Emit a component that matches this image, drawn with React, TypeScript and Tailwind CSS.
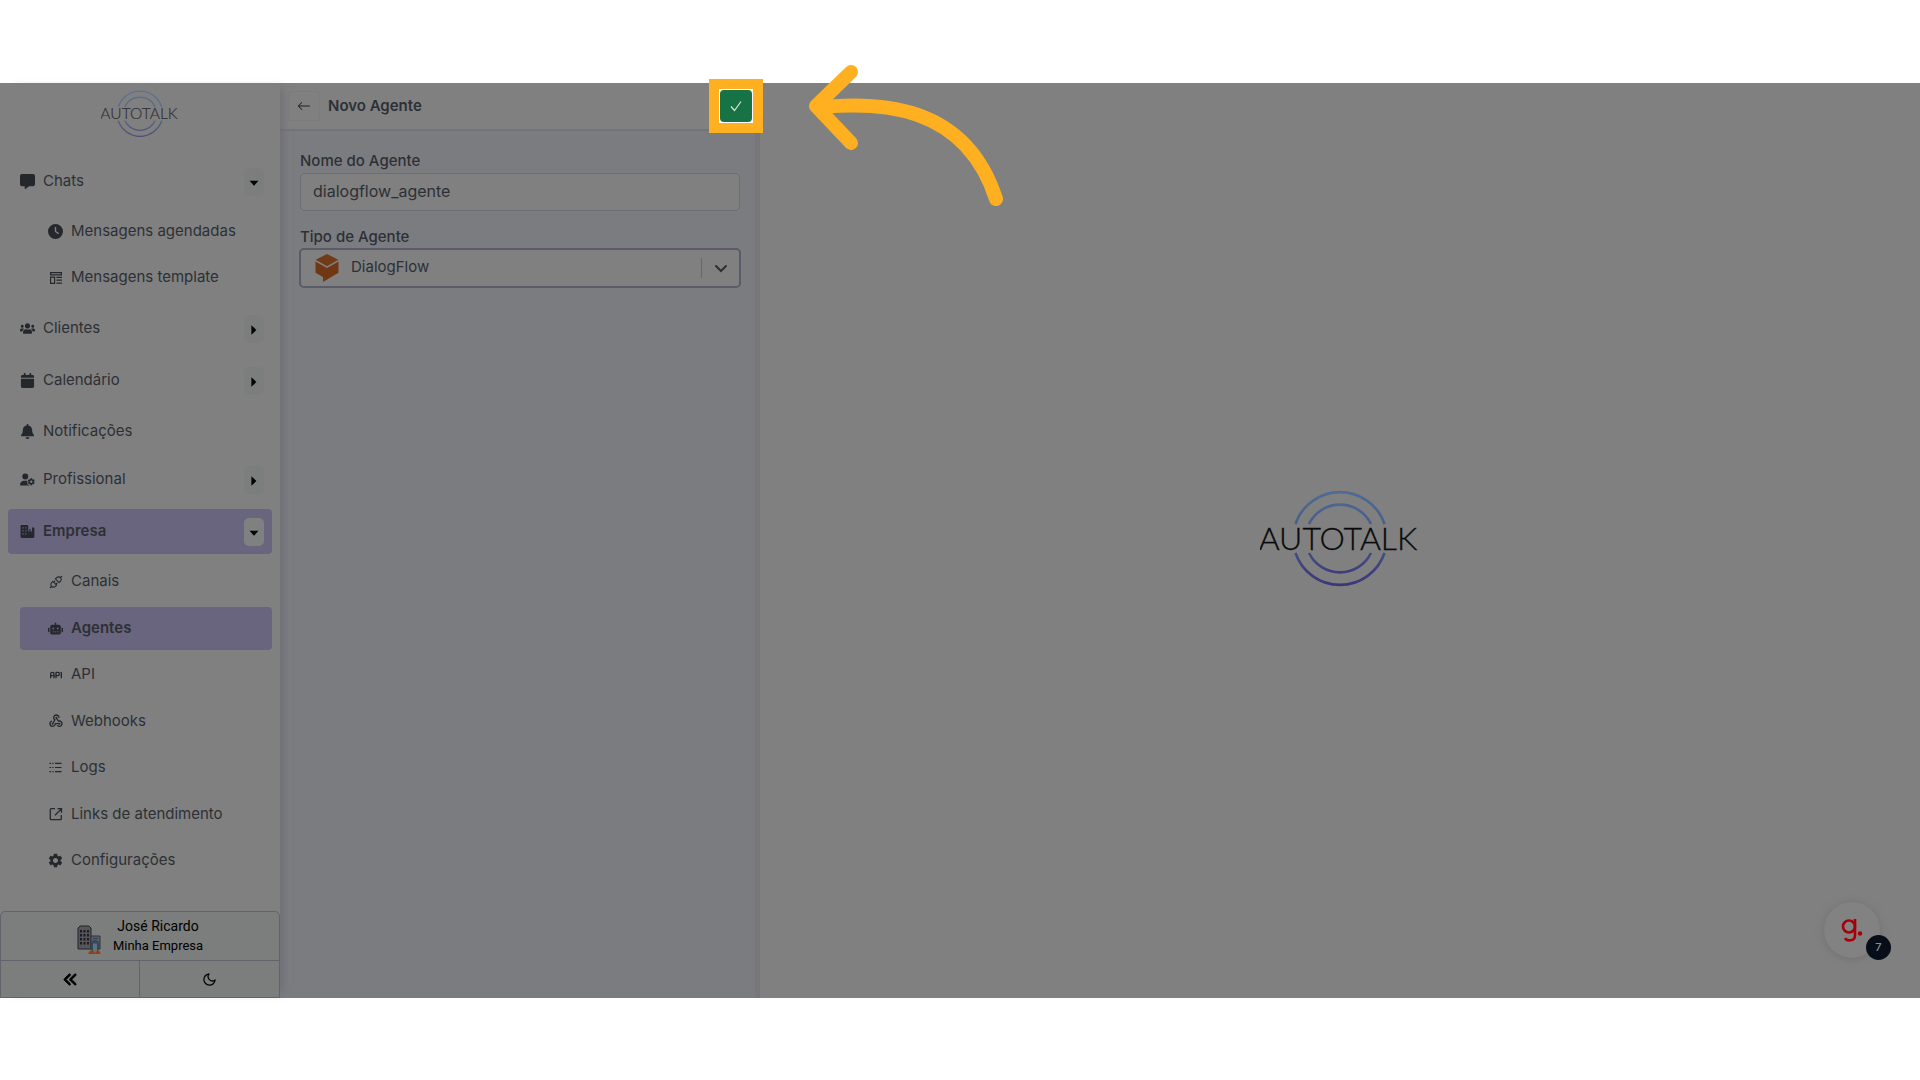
import React from "react";
import { FaMessage, FaCalendar, FaBell, FaUserGear, FaAnglesLeft, FaClock } from "react-icons/fa6";
import { FaUsers, FaRobot } from "react-icons/fa";
import { AiOutlineApi } from "react-icons/ai";
import { MdOutlineWebhook, MdSettings } from "react-icons/md";
import { TbApi } from "react-icons/tb";
import { FiMoon } from "react-icons/fi";
import { BsArrowLeft } from "react-icons/bs";

type IconType = React.ComponentType<{ className?: string }>;

const TemplateIcon: IconType = ({ className }) => (
  <svg viewBox="0 0 12 12" fill="none" stroke="currentColor" className={className} aria-hidden="true">
    <path d="M.6.6h10.8v2.2H.6zM.6 5.2h4v6.2h-4zM6.4 5.3H12M6.4 8.2H12M6.4 11.2H12" strokeWidth="1.2" />
  </svg>
);

const BuildingIcon: IconType = ({ className }) => (
  <svg viewBox="0 0 14 14" className={className} aria-hidden="true">
    <path
      fill="currentColor"
      fillRule="evenodd"
      d="M1.500 1h5.200a1 1 0 0 1 1 1v5h1V4.600h1.200v2.400h1.300V3.200h1.200a1 1 0 0 1 1 1V12a1 1 0 0 1-1 1H1.500a1 1 0 0 1-1-1V2a1 1 0 0 1 1-1zM2.300 3v1.200h1.100V3zm0 2.800v1.200h1.100V5.800zm0 2.800v1.200h1.100V8.600zM4.900 3v1.200H6V3zm0 2.800v1.200H6V5.800zm0 2.800v1.200H6V8.600z"
    />
  </svg>
);

const LogsIcon: IconType = ({ className }) => (
  <svg viewBox="0 0 14 14" stroke="currentColor" strokeWidth="1.2" className={className} aria-hidden="true">
    <path d="M.5 2.500h1.800M.5 7h1.800M.5 11.500h1.800M3.600 2.500h1.400M3.600 7h1.400M3.600 11.500h1.400M6.500 2.500h7M6.500 7h7M6.500 11.500h7" />
  </svg>
);

const ExternalIcon: IconType = ({ className }) => (
  <svg viewBox="0 0 14 14" fill="none" stroke="currentColor" strokeWidth="1.300" className={className} aria-hidden="true">
    <path d="M6 1.700H2.200a.9.900 0 0 0-.9.900v9.200c0 .5.400.9.900.9h9.200c.5 0 .9-.4.900-.9V8M8.500 1.700h4v4M12.300 1.900 6 8.200" />
  </svg>
);

function Logo({ className, id }: { className: string; id: string }) {
  return (
    <svg viewBox="0 0 160 98" className={className} role="img" aria-label="AUTOTALK">
      <defs>
        <linearGradient id={id} x1="0" y1="0" x2="0" y2="98" gradientUnits="userSpaceOnUse">
          <stop offset="0" stopColor="#4e6c94" />
          <stop offset="0.450" stopColor="#465a88" />
          <stop offset="1" stopColor="#3a3478" />
        </linearGradient>
      </defs>
      <g fill="none" stroke={`url(#${id})`} strokeWidth="2.600">
        <path d="M35.500 34a47 47 0 0 1 89 0M35.500 63a47 47 0 0 0 89 0" />
        <path d="M49 34a34.500 34.500 0 0 1 62 0M49 63a34.500 34.500 0 0 0 62 0" />
      </g>
      <text
        x="78"
        y="60"
        textAnchor="middle"
        fontSize="32"
        stroke="#0a0a0a"
        strokeWidth="0.300"
        className="fill-[#0a0a0a] font-[family-name:Lato,sans-serif] font-light"
      >
        AUTOTALK
      </text>
    </svg>
  );
}

function Caret({ open }: { open?: boolean }) {
  return (
    <svg viewBox="0 0 10 10" className="size-[10px] fill-black" aria-hidden="true">
      {open ? <path d="M.6 2.800h8.800L5 7.800z" /> : <path d="M2.400.2v9.600L7.400 5z" />}
    </svg>
  );
}

interface GroupProps {
  icon: IconType;
  label: string;
  toggle?: "open" | "closed";
  active?: boolean;
}

function GroupRow({ icon: Icon, label, toggle, active }: GroupProps) {
  return (
    <div
      className={`flex items-center rounded-[4px] pl-3 pr-2 ${toggle ? "h-[45px]" : "h-[43px]"} ${
        active ? "bg-[#69657e] font-semibold" : ""
      }`}
    >
      <a href="#" className="flex flex-1 items-center gap-2">
        <Icon className="size-[15px] text-[#24282d]" />
        {label}
      </a>
      {toggle && (
        <button
          type="button"
          aria-label={`Alternar ${label}`}
          className={`flex h-7 w-5 items-center justify-center rounded-[5px] pt-[2px] ${active ? "bg-[#7e8180]" : "bg-[#7c7e7d]"}`}
        >
          <Caret open={toggle === "open"} />
        </button>
      )}
    </div>
  );
}

interface SubProps {
  icon: IconType;
  label: string;
  active?: boolean;
  iconSize?: string;
}

function SubRow({ icon: Icon, label, active, iconSize = "size-[15px]" }: SubProps) {
  return (
    <li>
      <a
        href="#"
        className={`ml-3 flex h-[43px] items-center gap-2 rounded-[4px] pl-7 ${active ? "bg-[#69657e] font-semibold" : ""}`}
      >
        <span className="flex size-[15px] items-center justify-center text-[#24282d]">
          <Icon className={`shrink-0 ${iconSize}`} />
        </span>
        {label}
      </a>
    </li>
  );
}

const companyItems: SubProps[] = [
  { icon: AiOutlineApi, label: "Canais", iconSize: "size-4" },
  { icon: FaRobot, label: "Agentes", active: true },
  { icon: TbApi, label: "API", iconSize: "size-4" },
  { icon: MdOutlineWebhook, label: "Webhooks", iconSize: "size-4" },
  { icon: LogsIcon, label: "Logs", iconSize: "size-[13px]" },
  { icon: ExternalIcon, label: "Links de atendimento", iconSize: "size-[14px]" },
  { icon: MdSettings, label: "Configurações", iconSize: "size-[17px]" },
];

function CompanyPicture() {
  return (
    <svg viewBox="0 0 24 30" className="h-[30px] w-6" aria-hidden="true">
      <path d="M1 3 3 1h9l2 2v21H1z" fill="#55555a" stroke="#25272b" />
      <path d="M14 11h9v13h-9z" fill="#5d6266" stroke="#2e3236" />
      <path d="M4 5v15M7.500 5v15M11 5v15" stroke="#1c1e22" strokeWidth="2" strokeDasharray="2.500 1.500" />
      <path d="M16 13.500h5" stroke="#33455a" strokeWidth="1.500" />
      <path d="M11.500 29c0-2.500 1.500-4 6-4s6 1.500 6 4z" fill="#96400f" />
      <path d="M14 19a4 4 0 0 1 8 0l.5 4.500-2.500 3h-4l-2.500-3z" fill="#31495c" />
      <path d="M16 18.500h4V26l-2 2-2-2z" fill="#667079" />
    </svg>
  );
}

function Sidebar() {
  return (
    <aside className="z-10 flex w-[280px] shrink-0 flex-col bg-[#808080] shadow-[8px_0_8px_-6px_#6c6c76]">
      <div className="flex h-[75px] justify-center pt-[7px]">
        <Logo id="ring-small" className="h-12 w-[78px] opacity-70" />
      </div>
      <nav className="flex flex-1 flex-col px-2 pt-px pb-[29px]">
        <GroupRow icon={FaMessage} label="Chats" toggle="open" />
        <ul className="mt-[6px] mb-[7px] flex flex-col gap-[3px]">
          <SubRow icon={FaClock} label="Mensagens agendadas" />
          <SubRow icon={TemplateIcon} label="Mensagens template" iconSize="size-3" />
        </ul>
        <div className="flex flex-col gap-[7px]">
          <GroupRow icon={FaUsers} label="Clientes" toggle="closed" />
          <GroupRow icon={FaCalendar} label="Calendário" toggle="closed" />
        </div>
        <div className="my-[7px] flex flex-col gap-1">
          <GroupRow icon={FaBell} label="Notificações" />
          <GroupRow icon={FaUserGear} label="Profissional" toggle="closed" />
        </div>
        <GroupRow icon={BuildingIcon} label="Empresa" toggle="open" active />
        <ul className="mt-[6px] flex flex-1 flex-col justify-between">
          {companyItems.map((item) => (
            <SubRow key={item.label} {...item} />
          ))}
        </ul>
      </nav>
      <footer className="rounded-t-[5px] border border-[#62646b] bg-[#7b7e7d] font-[family-name:Roboto,sans-serif] text-black">
        <button type="button" className="flex h-12 w-full items-center justify-center gap-3">
          <span className="pt-2">
            <CompanyPicture />
          </span>
          <span className="flex flex-col items-center leading-[19px]">
            <span className="text-[14px]">José Ricardo</span>
            <span className="text-[13px]">Minha Empresa</span>
          </span>
        </button>
        <div className="grid h-[37px] grid-cols-2 divide-x divide-[#62646b] border-t border-[#62646b]">
          <button type="button" aria-label="Recolher menu" className="flex items-center justify-center">
            <FaAnglesLeft className="size-[15px]" stroke="black" strokeWidth="30" />
          </button>
          <button type="button" aria-label="Modo escuro" className="flex items-center justify-center">
            <FiMoon className="size-[15px]" />
          </button>
        </div>
      </footer>
    </aside>
  );
}

function DialogflowIcon() {
  return (
    <svg viewBox="0 0 24 28" className="h-7 w-6" aria-hidden="true">
      <path d="M12 0 23.300 5.800 12 12.200.7 5.800z" fill="#713b18" />
      <path d="M.5 7.500 12 13.900 23.500 7.500v11.300L8 28v-5.100L.5 18.800z" fill="#713715" />
    </svg>
  );
}

function AgentForm() {
  return (
    <section className="flex w-[480px] shrink-0 flex-col">
      <header className="flex h-12 items-center gap-2 border-b-2 border-[#737378] bg-[#808080] px-2">
        <button
          type="button"
          aria-label="Voltar"
          className="flex h-[30px] w-8 items-center justify-center rounded-[4px] border border-[#7c7c7c] text-[#1e2124]"
        >
          <BsArrowLeft className="size-[14px]" />
        </button>
        <h1 className="flex-1 text-[15px] font-semibold">Novo Agente</h1>
        <div className="relative flex size-8 items-center justify-center">
          <div className="absolute -inset-[11px] border-[10px] border-[#ffb020] bg-white" />
          <button
            type="button"
            aria-label="Salvar"
            className="relative flex size-8 items-center justify-center rounded-[4px] bg-[#177245] text-[#d5e6dc]"
          >
            <svg viewBox="0 0 12 12" className="size-3" fill="none" stroke="currentColor" aria-hidden="true">
              <path d="m1 6.500 3.500 4L11 1.500" strokeWidth="1.200" />
            </svg>
          </button>
        </div>
      </header>
      <form className="flex-1 border-r-[5px] border-[#77777b] bg-[#7b7c7f] pt-[18px] pr-[15px] pl-5">
        <label htmlFor="agent-name" className="block text-[15px] leading-6 font-medium">
          Nome do Agente
        </label>
        <input
          id="agent-name"
          type="text"
          defaultValue="dialogflow_agente"
          className="block h-[38px] w-full rounded-[5px] border border-[#6c6d71] bg-[#808080] px-3 pb-[2px] text-[16px] outline-none"
        />
        <label htmlFor="agent-type" className="mt-[14px] block text-[15px] leading-6 font-medium">
          Tipo de Agente
        </label>
        <div className="flex h-[38px] items-center rounded-[4px] bg-[#808080] pr-3 pl-[15px] outline-2 -outline-offset-1 outline-[#5a5a69]">
          <DialogflowIcon />
          <select
            id="agent-type"
            defaultValue="DialogFlow"
            className="ml-3 flex-1 appearance-none bg-transparent pb-[2px] text-[15px] outline-none"
          >
            <option>DialogFlow</option>
          </select>
          <span className="mr-3 h-5 w-px bg-[#67676a]" />
          <svg viewBox="0 0 14 14" className="size-[14px]" fill="none" stroke="#2d2f34" strokeWidth="2" aria-hidden="true">
            <path d="m2 5 5 5 5-5" strokeLinecap="round" />
          </svg>
        </div>
      </form>
    </section>
  );
}

function HelpBubble() {
  return (
    <button
      type="button"
      aria-label="Ajuda"
      className="absolute right-10 bottom-10 flex size-14 items-center justify-center rounded-full bg-[#828282] shadow-[0_1px_8px_#707070]"
    >
      <svg viewBox="0 0 22 24" className="h-6 w-[22px]" fill="none" stroke="#a80008" strokeWidth="2.600" aria-hidden="true">
        <circle cx="8" cy="8.500" r="6" />
        <path d="M14 1v16.500c0 6-8.500 6-9.800 2.500" />
        <circle cx="19" cy="15.500" r="2.200" fill="#a80008" stroke="none" />
      </svg>
      <span className="absolute -right-[11px] -bottom-[2px] flex size-[25px] items-center justify-center rounded-full bg-[#080e18] text-[11px] font-medium text-[#898c90]">
        7
      </span>
    </button>
  );
}

export default function App() {
  return (
    <div className="flex min-h-screen flex-col bg-white pt-[83px] pb-[82px] font-[Inter,sans-serif] text-[15px] text-[#2c3036]">
      <div className="relative flex flex-1 bg-[#808080]">
        <Sidebar />
        <AgentForm />
        <main className="relative flex flex-1 items-center justify-center">
          <Logo id="ring-large" className="mb-1 h-[98px] w-40" />
          <HelpBubble />
          <svg
            viewBox="0 0 196 142"
            className="absolute -top-[19px] left-12 h-[142px] w-[196px]"
            fill="none"
            stroke="#ffb020"
            strokeWidth="14"
            strokeLinecap="round"
            strokeLinejoin="round"
            aria-hidden="true"
          >
            <path d="M43 8 8 42l35 37" />
            <path d="M14 43C70 38 157 39 188 135" />
          </svg>
        </main>
      </div>
    </div>
  );
}
